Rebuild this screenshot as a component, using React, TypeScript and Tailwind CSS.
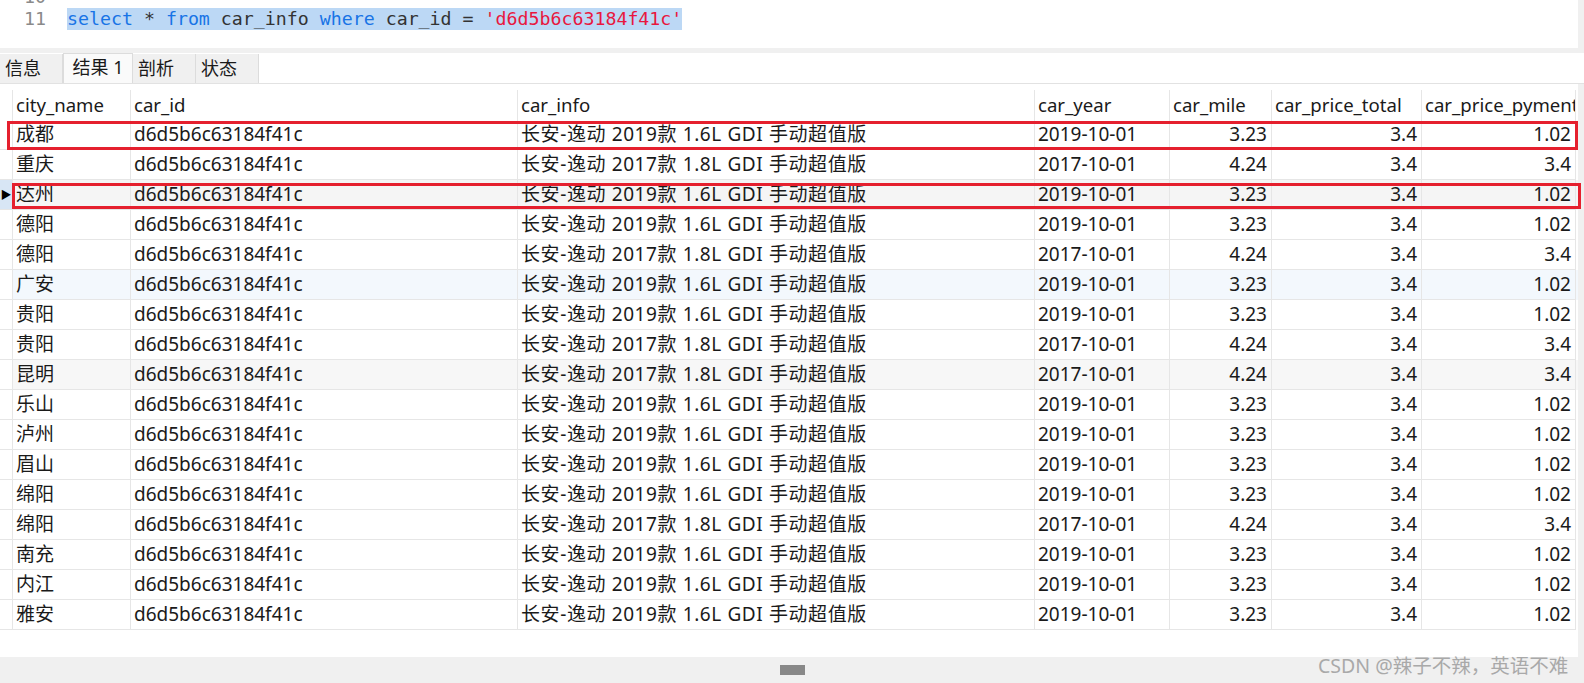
import React from "react";

type Row = {
  city: string;
  year: 2019 | 2017;
};

const rows: Row[] = [
  { city: "成都", year: 2019 },
  { city: "重庆", year: 2017 },
  { city: "达州", year: 2019 },
  { city: "德阳", year: 2019 },
  { city: "德阳", year: 2017 },
  { city: "广安", year: 2019 },
  { city: "贵阳", year: 2019 },
  { city: "贵阳", year: 2017 },
  { city: "昆明", year: 2017 },
  { city: "乐山", year: 2019 },
  { city: "泸州", year: 2019 },
  { city: "眉山", year: 2019 },
  { city: "绵阳", year: 2019 },
  { city: "绵阳", year: 2017 },
  { city: "南充", year: 2019 },
  { city: "内江", year: 2019 },
  { city: "雅安", year: 2019 },
];

const cols = "grid grid-cols-[13px_118px_387px_517px_135px_102px_150px_154px]";
const cell = "h-[30px] flex items-center px-[3px] border-r border-b border-[#e6e6e6] whitespace-nowrap overflow-hidden";
const num = "h-[30px] flex items-center justify-end pr-[4px] border-r border-b border-[#e6e6e6] whitespace-nowrap overflow-hidden";
const head = "h-[30px] flex items-center px-[3px] border-r border-[#e6e6e6] whitespace-nowrap overflow-hidden text-[18.6px]";

function rowBg(i: number) {
  if (i === 2) return "bg-[#f5f5f5]";
  if (i === 5) return "bg-[#f3f8fd]";
  if (i === 8) return "bg-[#f7f7f7]";
  return "bg-white";
}

export default function App() {
  const tabs = ["信息", "结果 1", "剖析", "状态"];

  return (
    <div
      className="relative w-[1584px] h-[683px] overflow-hidden bg-[#f0f0f0] text-[#1a1a1a]"
      style={{ fontFamily: '"Noto Sans", "Noto Sans CJK SC", sans-serif' }}
    >
      {/* SQL editor */}
      <div className="flex h-[48px]">
        <div className="flex-1 bg-white overflow-hidden">
          <div className="-mt-[14px] text-[18.25px] leading-[22px]" style={{ fontFamily: '"DejaVu Sans Mono", monospace' }}>
            <div className="flex">
              <div className="w-[46px] text-right text-[#8a8a8a]">10</div>
            </div>
            <div className="flex">
              <div className="w-[46px] text-right text-[#8a8a8a]">11</div>
              <div className="ml-[21px] bg-[#bcd8f5] whitespace-pre">
                <span className="text-[#1874e6]">select</span>
                <span className="text-[#333]"> * </span>
                <span className="text-[#1874e6]">from</span>
                <span className="text-[#333]"> car_info </span>
                <span className="text-[#1874e6]">where</span>
                <span className="text-[#333]"> car_id = </span>
                <span className="text-[#e8173f]">'d6d5b6c63184f41c'</span>
              </div>
            </div>
          </div>
        </div>
        <div className="w-[6px] bg-[#f0f0f0]" />
      </div>

      <div className="h-[5px] bg-[#f0f0f0]" />

      {/* tabs */}
      <div className="flex h-[31px] bg-white border-b border-[#e2e2e2] text-[18px]">
        {tabs.map((t, i) => (
          <div
            key={t}
            className={
              i === 1
                ? "w-[70px] flex items-center justify-center bg-[#fafafa] border border-b-0 border-[#dcdcdc] pb-[2px]"
                : "w-[63px] flex items-center justify-start pl-[5px] bg-[#f0f0f0] border-r border-[#dcdcdc] mt-[1px]"
            }
          >
            {t}
          </div>
        ))}
      </div>

      {/* result grid */}
      <div className="flex h-[573px]">
        <div className="w-[1578px] bg-white pt-[6px] text-[19px]">
          <div className={cols}>
            <div className="h-[30px] border-r border-[#e6e6e6]" />
            <div className={head}>city_name</div>
            <div className={head}>car_id</div>
            <div className={head}>car_info</div>
            <div className={head}>car_year</div>
            <div className={head}>car_mile</div>
            <div className={head}>car_price_total</div>
            <div className={head}>car_price_pyment</div>
          </div>
          {rows.map((r, i) => (
            <div key={i} className={cols + " " + rowBg(i)}>
              <div
                className={
                  "h-[30px] flex items-center justify-center border-r border-b border-[#e6e6e6] " +
                  (i === 2 ? "bg-[#d8e6f5]" : "bg-white")
                }
              >
                {i === 2 && <span className="text-[11px] leading-none text-black">▶</span>}
              </div>
              <div className={cell}>{r.city}</div>
              <div className={cell}>d6d5b6c63184f41c</div>
              <div className={cell + " tracking-[0.6px]"}>
                {r.year === 2019 ? "长安-逸动 2019款 1.6L GDI 手动超值版" : "长安-逸动 2017款 1.8L GDI 手动超值版"}
              </div>
              <div className={cell}>{r.year}-10-01</div>
              <div className={num}>{r.year === 2019 ? "3.23" : "4.24"}</div>
              <div className={num}>3.4</div>
              <div className={num}>{r.year === 2019 ? "1.02" : "3.4"}</div>
            </div>
          ))}
        </div>
        <div className="w-[6px] bg-[#f0f0f0]" />
      </div>

      {/* horizontal scrollbar */}
      <div className="h-[26px] flex items-center justify-center bg-[#f0f0f0]">
        <div className="w-[25px] h-[10px] bg-[#888888] ml-[1px]" />
      </div>

      {/* annotation boxes */}
      <div className="absolute left-[7px] top-[121px] w-[1571px] h-[29px] border-[3px] border-[#e5202e]" />
      <div className="absolute left-[12px] top-[183px] w-[1569px] h-[26px] border-[3px] border-[#e5202e]" />

      {/* watermark */}
      <div className="absolute left-[1318px] top-[651px] text-[19.5px] text-[#a9a9a9] whitespace-nowrap">
        CSDN @辣子不辣，英语不难
      </div>
    </div>
  );
}
